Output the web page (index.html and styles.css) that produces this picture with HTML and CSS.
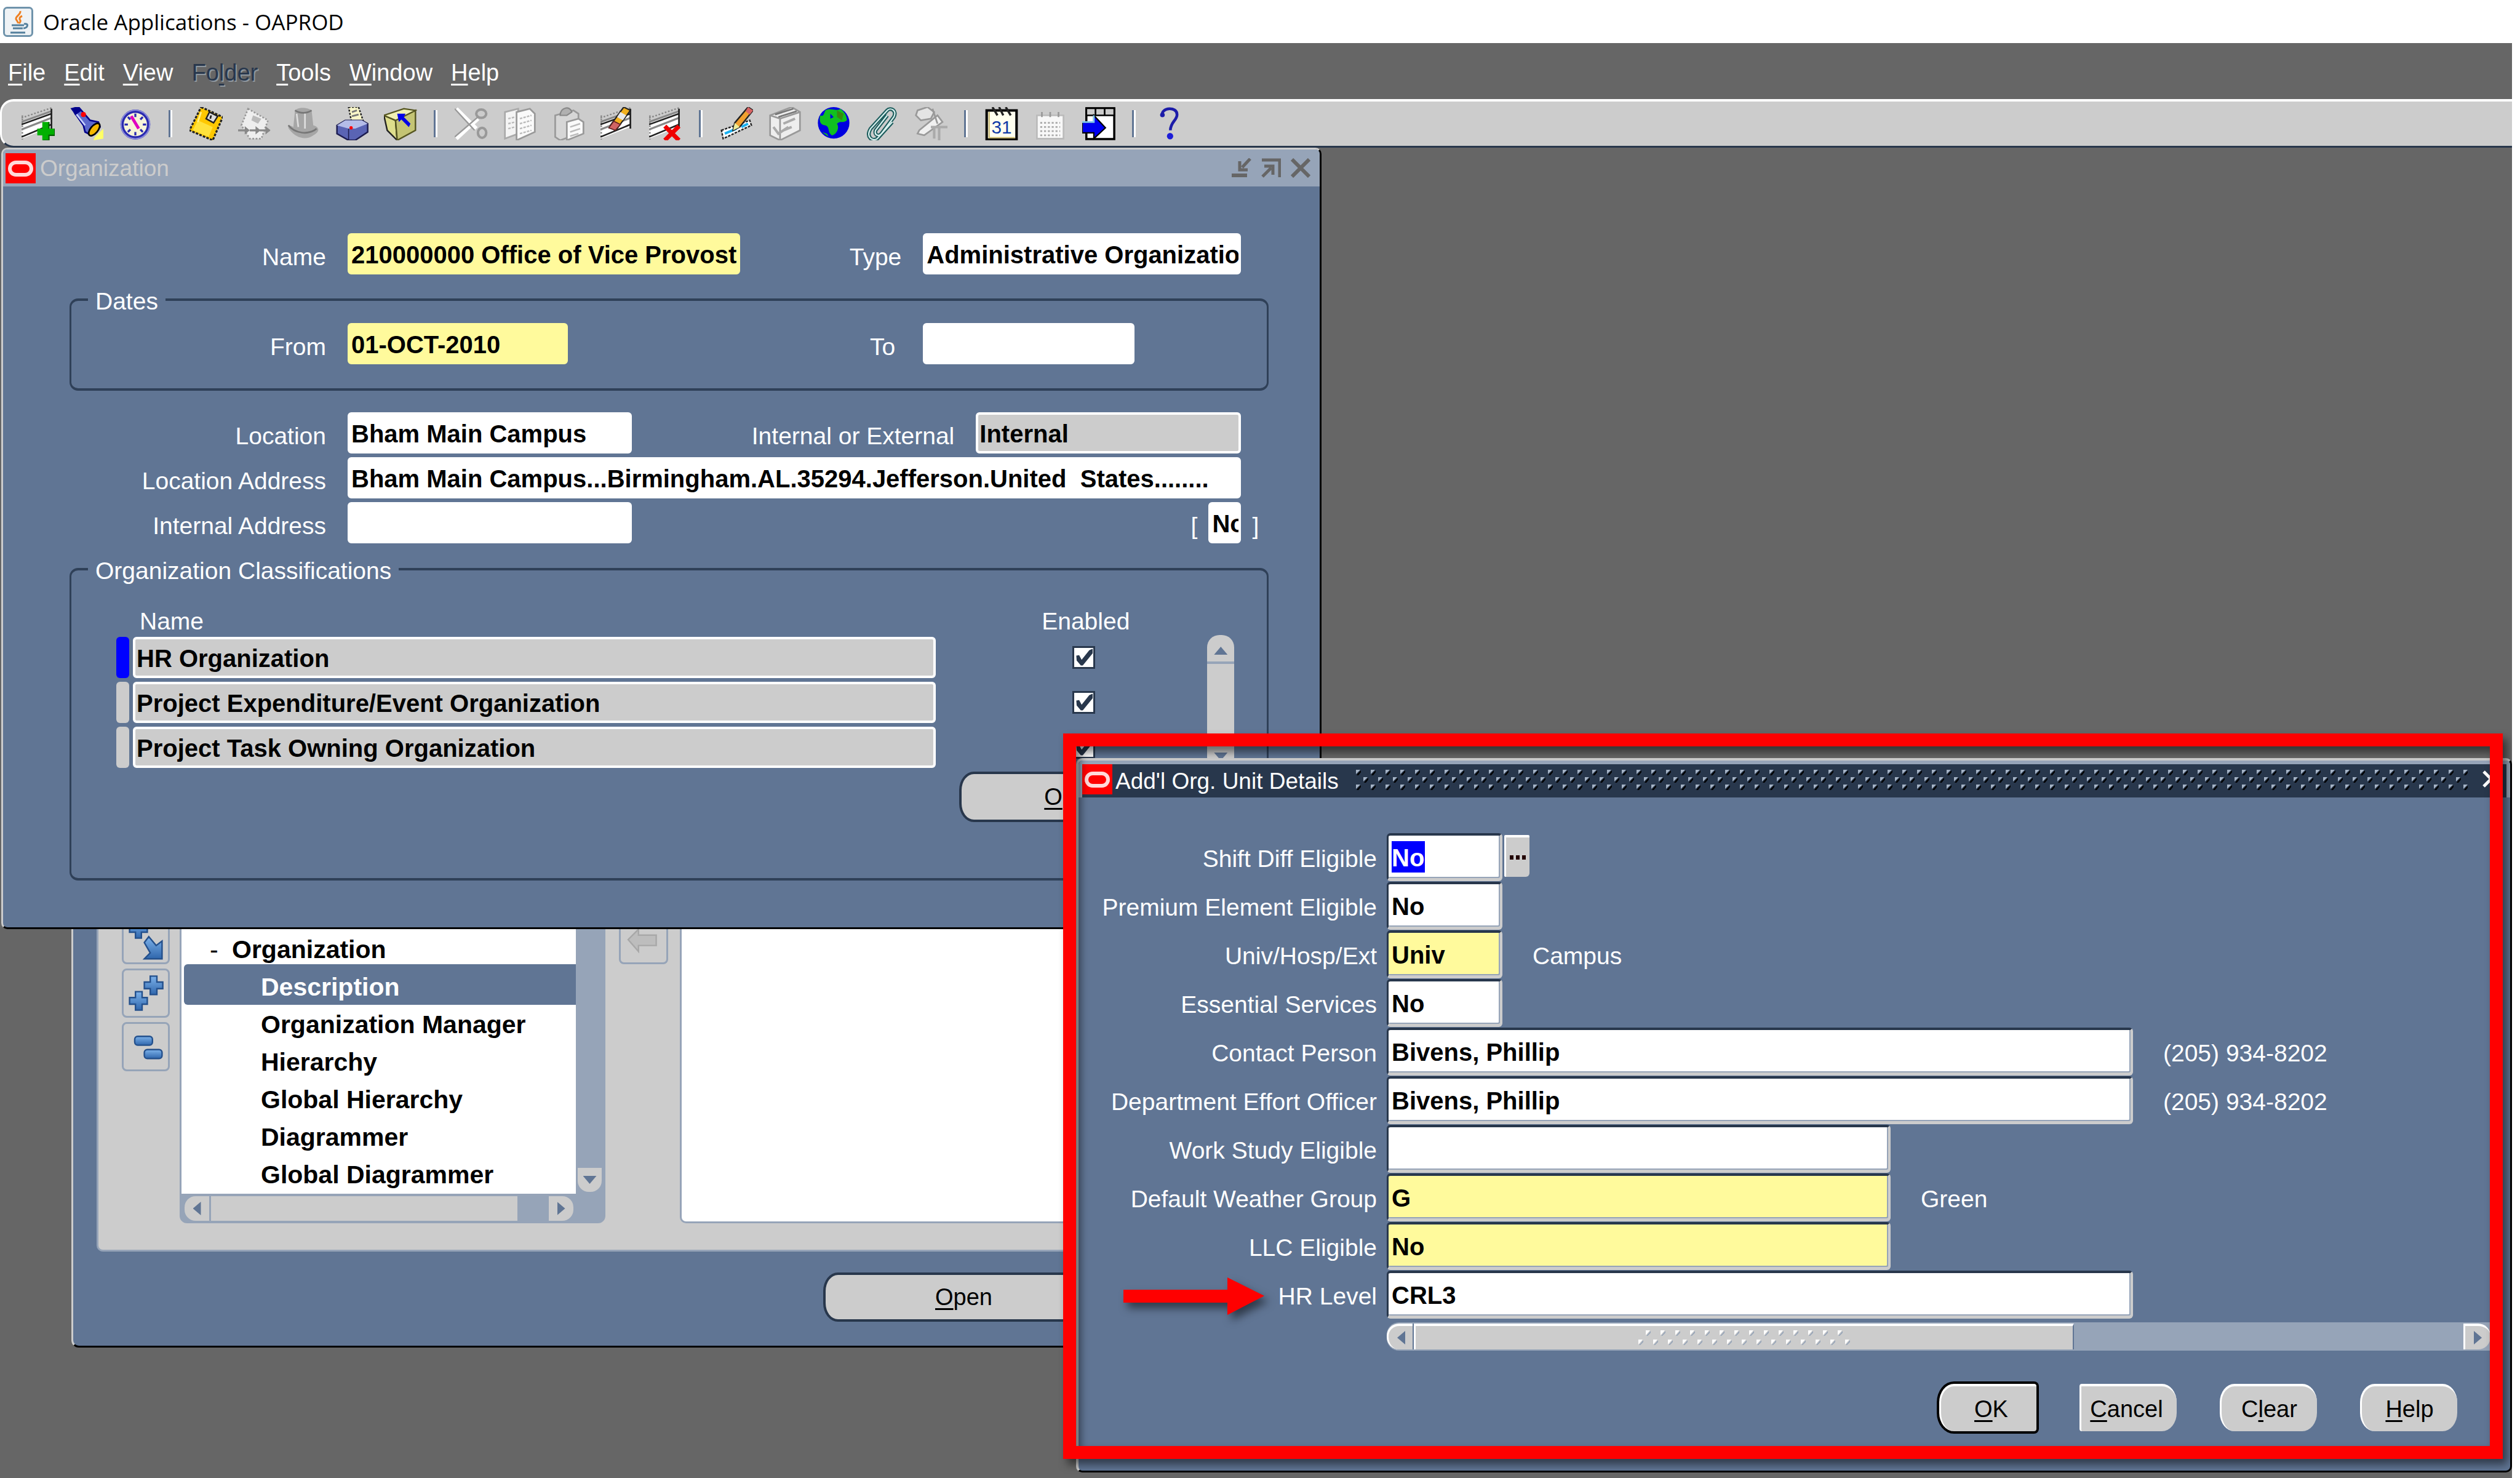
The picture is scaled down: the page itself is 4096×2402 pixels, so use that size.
FILE: index.html
```html
<!DOCTYPE html>
<html lang="en">
<head>
<meta charset="utf-8">
<title>Oracle Applications - OAPROD</title>
<link rel="stylesheet" href="styles.css">
</head>
<body>
<svg class="defs" aria-hidden="true">
  <symbol id="sheet" viewBox="0 0 20 20">
    <path d="M0 9 18 2V12L0 19Z" fill="#fff"/>
    <path d="M0 6.5 18 .5M.5 5V19.500" stroke="#888" stroke-width=".9" stroke-dasharray="1 1" fill="none"/>
    <path d="M0 9 18 2.500M0 13.500 18 6.500" stroke="#888" stroke-width="1.200" fill="none"/>
    <path d="M0 10.500 18 4M0 18 18 10.500M18 1V13" stroke="#222" stroke-width="1" fill="none"/>
  </symbol>
  <symbol id="oracle" viewBox="0 0 49 49">
    <rect width="49" height="49" fill="#f00"/>
    <rect x="7" y="15" width="35" height="20" rx="10" fill="none" stroke="#ffd9d9" stroke-width="6"/>
  </symbol>
  <linearGradient id="glass" x1="0" y1="0" x2="0" y2="1">
    <stop offset="0" stop-color="#7db2ea"/>
    <stop offset="1" stop-color="#2f66ac"/>
  </linearGradient>
  <pattern id="grip" width="24" height="24" patternUnits="userSpaceOnUse">
    <path d="M0 0H7L0 7ZM12 12H19L12 19Z" fill="#a6b4c6"/>
    <path d="M8 1V4L4 9H1L3 6ZM20 13V16L16 21H13L15 18Z" fill="#000"/>
  </pattern>
  <pattern id="thumbgrip" width="24" height="30" patternUnits="userSpaceOnUse">
    <path d="M12 0H19L12 8ZM0 15H7L0 23Z" fill="#fff"/>
    <path d="M20 1V4L15 9H13ZM8 16V19L3 24H1Z" fill="#96a4b8"/>
  </pattern>
</svg>

<header class="titlebar">
  <svg class="java" viewBox="0 0 49 49" aria-hidden="true">
    <rect x="1.500" y="1.500" width="46" height="46" rx="5" fill="#eef2f5" stroke="#6f93ab" stroke-width="3"/>
    <path d="M28 7C29 13 20 15 21 20C22 23 25 24 24 27M31 15C26 17 26 20 28 22C29 24 27 26 26 27" fill="none" stroke="#ee8022" stroke-width="3"/>
    <path d="M14 30H34M16 35H32M12 42H36" stroke="#537f9c" stroke-width="3" fill="none"/>
    <path d="M34 28C42 26 41 34 33 35" stroke="#537f9c" stroke-width="3" fill="none"/>
  </svg>
  <h1>Oracle Applications - OAPROD</h1>
</header>

<nav class="menubar">
  <button><u>F</u>ile</button>
  <button><u>E</u>dit</button>
  <button><u>V</u>iew</button>
  <button disabled>Fo<u>l</u>der</button>
  <button><u>T</u>ools</button>
  <button><u>W</u>indow</button>
  <button><u>H</u>elp</button>
</nav>

<div class="toolbar">
  <button aria-label="New"><svg viewBox="0 0 20 20"><use href="#sheet"/><path d="M12.500 9H16.500V13H20V17H16.500V20H12.500V17H9.500V13H12.500Z" fill="#00b000"/><path d="M16.500 9V13M20 13V17H16.500V20H13" fill="none" stroke="#006000" stroke-width=".8"/></svg></button>
  <button aria-label="Find"><svg viewBox="0 0 20 20"><path d="M15 18 20 13 20 19 14 20Z" fill="#ffff66"/><path d="M1 1 5 0 12 8 17 9 18 12 13 17 9 15 8 11Z" fill="#5c68cc" stroke="#00008b" stroke-width="1"/><path d="M2 2 9 11" stroke="#c8d0ff" stroke-width="1"/><path d="M1 1 5 0 7 2 3 5Z" fill="#00008b"/><circle cx="8" cy="4.500" r="1.500" fill="#f00"/><ellipse cx="14.500" cy="13.500" rx="4.500" ry="2.200" transform="rotate(-50 14.500 13.500)" fill="#f5b800" stroke="#000"/></svg></button>
  <button aria-label="Show Navigator"><svg viewBox="0 0 20 20"><circle cx="10" cy="10.500" r="8" fill="#f6f3d8" stroke="#2a2ab0" stroke-width="2"/><circle cx="10" cy="10.500" r="8.600" fill="none" stroke="#8c8cdc" stroke-width=".7"/><path d="M10 4V6M10 15V17M3.500 10.500H5.500M14.500 10.500H16.500M5.500 6 7 7.500M14.500 6 13 7.500M5.500 15 7 13.500M14.500 15 13 13.500" stroke="#2a2ab0" stroke-width="1.200"/><path d="M7.500 5.500 12 13" stroke="#e000c0" stroke-width="1.800"/></svg></button>
  <span class="sep"></span>
  <button aria-label="Save"><svg viewBox="0 0 20 20"><path d="M7 0 20 6 14 20 0 14Z" fill="#ffc800" stroke="#222" stroke-width="1.200" stroke-dasharray="1.500 .8"/><path d="M12 3 17 5.500 14.500 9.500 10 7Z" fill="#ddd" stroke="#222" stroke-width=".9"/><path d="M13 5 12.500 7" stroke="#222"/><path d="M5 8 14 12 11.500 18 2 14Z" fill="#ffe23c"/><path d="M7 3 5 9" stroke="#fff08a"/></svg></button>
  <button aria-label="Next Step" disabled><svg viewBox="0 0 20 20"><path d="M6 1 18 8 14 19 7 19 2 11Z" fill="#eee" stroke="#999" stroke-dasharray="1 1"/><path d="M9 5 14 7 12 10 8 8Z" fill="#bbb"/><path d="M0 14H6M7 14H12M13 14H19" stroke="#888" stroke-width="1.200"/><path d="M4 11.500 7 14 4 16.500ZM10.500 11.500 13.500 14 10.500 16.500ZM16.500 11.500 19.500 14 16.500 16.500Z" fill="#888"/></svg></button>
  <button aria-label="Switch Responsibility" disabled><svg viewBox="0 0 20 20"><path d="M5 2C7 0 12 0 15 2L16 11C20 12 20 15 16 17C12 20 6 19 2 14C0 12 1 10 4 12Z" fill="#a6a6a6"/><path d="M5 2C8 4 12 4 15 2M1 11C5 16 13 17 18 13" fill="none" stroke="#777"/><path d="M6 4 7 12M11 4V13" stroke="#ddd"/></svg></button>
  <button aria-label="Print"><svg viewBox="0 0 20 20"><path d="M8 0H14L17 9 10 10Z" fill="#f8f6c8" stroke="#222" stroke-width=".9" stroke-dasharray="1.200 .8"/><path d="M10 3 13 2M10 5.500 14 4.500" stroke="#777"/><path d="M1 11 6 8H16L19.500 10V15L12 20H8L1 16Z" fill="#5a64b4" stroke="#1c1c50" stroke-width=".9"/><path d="M1 11 6 8H16L19.500 10 12 13H8Z" fill="#b4bce8"/><path d="M8 13V20" stroke="#1c1c50" stroke-width=".6"/><circle cx="9.500" cy="12.500" r="1" fill="#f00"/></svg></button>
  <button aria-label="Close Form"><svg viewBox="0 0 20 20"><path d="M0 5 7 8 8 20 2 14Z" fill="#dede8c" stroke="#222" stroke-width=".9"/><path d="M7 8 19 2V14L8 20Z" fill="#c4c474" stroke="#555520" stroke-width=".9"/><path d="M0 5 12 1 19 2 7 8Z" fill="#efefb4" stroke="#555520" stroke-width=".8"/><path d="M8 4H13L12 6 16 10 15 12 10.500 7.500 9 9Z" fill="#0000e6"/></svg></button>
  <span class="sep"></span>
  <button aria-label="Cut" disabled><svg viewBox="0 0 20 20"><path d="M1 1 13 13M1 19 14 7" stroke="#fff" stroke-width="2.400"/><path d="M0 1 12 14M0 18 14 6" stroke="#999" stroke-width=".9"/><ellipse cx="16" cy="4" rx="3" ry="2.500" fill="none" stroke="#999" stroke-width="1.500"/><ellipse cx="16.500" cy="15.500" rx="2.500" ry="3" fill="none" stroke="#999" stroke-width="1.500"/></svg></button>
  <button aria-label="Copy" disabled><svg viewBox="0 0 20 20"><path d="M1 3 9 1V16L1 19Z" fill="#f4f4f4" stroke="#aaa"/><path d="M8 3 16 1 19 4V15L8 20Z" fill="#fafafa" stroke="#999"/><path d="M10 7 17 5M10 10 17 8M10 13 17 11M10 16 17 14M3 7 7 6M3 10 7 9M3 13 7 12" stroke="#bbb" stroke-width=".9" stroke-dasharray="1.500 .7"/></svg></button>
  <button aria-label="Paste" disabled><svg viewBox="0 0 20 20"><path d="M2 5 13 2 16 4V16L5 20 2 18Z" fill="#d6d6d6" stroke="#999"/><path d="M5 5C5 0 11 -1 12 3L9 5Z" fill="#b0b0b0" stroke="#888" stroke-width=".8"/><path d="M9 9 16 7 19 9V16L9 20Z" fill="#fafafa" stroke="#999"/><path d="M11 12 17 10M11 15 17 13M11 17.500 16 16" stroke="#bbb" stroke-width=".9"/></svg></button>
  <button aria-label="Clear Record"><svg viewBox="0 0 20 20"><use href="#sheet"/><path d="M14 0 18 2 10 13 6 11Z" fill="#f2b01e" stroke="#222" stroke-width=".8"/><path d="M12 3 15.500 5 13.500 8 10 6Z" fill="#e8e8e8"/><path d="M8 8.500 12 10.500 9 14 5 12.500Z" fill="#d06464" stroke="#602020" stroke-width=".6"/></svg></button>
  <button aria-label="Delete"><svg viewBox="0 0 20 20"><use href="#sheet"/><path d="M9.500 11.500 18 20M18 11.500 9.500 20" stroke="#f00000" stroke-width="2.600"/></svg></button>
  <span class="sep"></span>
  <button aria-label="Edit Field"><svg viewBox="0 0 20 20"><path d="M1 14 18 8 19 11 2 19Z" fill="#fff" stroke="#222" stroke-width=".9" stroke-dasharray="1.500 .7"/><path d="M3 16 10 13M13 12 17 10" stroke="#1ab0f0" stroke-width="1.500"/><path d="M17 0 20 2 12 12 8 14 9 9.500Z" fill="#f0a030" stroke="#222" stroke-width=".9"/><path d="M17 0 20 2 18 4.500 15.500 2.500Z" fill="#d86464"/><path d="M9 9.500 12 12 8 14Z" fill="#eeee9a"/></svg></button>
  <button aria-label="Zoom" disabled><svg viewBox="0 0 20 20"><path d="M1 5 14 0 19 3V14L7 20 1 17Z" fill="#eee" stroke="#999"/><path d="M1 5 7 7 19 3M7 7V20" fill="none" stroke="#999"/><path d="M4 4.500 15 1M6 6 17 2.500" stroke="#777"/><path d="M9 10 16 7M9 14 14 12M3 12 6 16 12 12" stroke="#aaa" stroke-width="1.500" fill="none"/></svg></button>
  <button aria-label="Translations"><svg viewBox="0 0 20 20"><circle cx="10" cy="9.500" r="9.500" fill="#0000e0"/><path d="M5 2C8 0 12 3 14 1C17 3 18 6 18 8C16 10 14 8 12 10C14 13 11 17 9 17C6 15 8 12 5 11C2 11 1 8 2 5C4 6 4 4 5 2Z" fill="#10c020"/><path d="M12 2 16 4 15 8 12 6Z" fill="#388a10"/><path d="M3 15 6 16 7 18Z" fill="#10c020"/><path d="M8 4 10 6 8 7Z" fill="#0000e0"/></svg></button>
  <button aria-label="Attachments"><svg viewBox="0 0 20 20"><path d="M13 5 6 14C5 17 8 18 9.500 16L17 6C19 2 15 0 13 2L3 13C0 18 4 21 7 19L16 9" fill="none" stroke="#1c5c5c" stroke-width="2.300"/><path d="M13 5 6 14C5 17 8 18 9.500 16L17 6C19 2 15 0 13 2L3 13C0 18 4 21 7 19L16 9" fill="none" stroke="#d8f0ee" stroke-width=".8"/></svg></button>
  <button aria-label="Folder Tools" disabled><svg viewBox="0 0 20 20"><path d="M2 2 8 0 12 3 10 7 4 8 1 5Z" fill="#e4e4e4" stroke="#999"/><path d="M3 14 14 5 17 9 6 17 2 16Z" fill="#f0f0f0" stroke="#999"/><path d="M10 12H20M12 12V19M15 12V20" stroke="#aaa" stroke-width="1.500"/><path d="M11 1 14 10" stroke="#999"/></svg></button>
  <span class="sep"></span>
  <button aria-label="Calendar"><svg viewBox="0 0 20 20"><path d="M1 2H19V19.500H1Z" fill="#fffff0" stroke="#000" stroke-width="1.500"/><path d="M2.500 3V18.500H18" fill="none" stroke="#c8b870" stroke-width=".8"/><path d="M4.500 0 7.500 5M8.500 0 11 5M12.500 0 15.500 5" stroke="#222" stroke-width="1.300"/><text x="10" y="16" text-anchor="middle" class="day">31</text></svg></button>
  <button aria-label="Schedule" disabled><svg viewBox="0 0 20 20"><path d="M2 5H18V19H2Z" fill="#f8f8f8" stroke="#bbb"/><path d="M5 3V6M10 3V6M15 3V6" stroke="#999"/><path d="M4 9.500H16M4 12H16M4 14.500H16M4 17H16" stroke="#aaa" stroke-width="1" stroke-dasharray="1.200 1.100"/></svg></button>
  <button aria-label="Export"><svg viewBox="0 0 20 20"><path d="M2.500.7H19.300V19.300H2.500Z" fill="#fff" stroke="#000" stroke-width="1.300"/><path d="M2.500.7H19.300V5H2.500Z" fill="#ccc" stroke="#000"/><path d="M8 1V5M13.500 1V5" stroke="#000"/><path d="M0 9H7V5L14 12.500 7 19V15.500H0Z" fill="#0000f0" stroke="#000" stroke-width=".8"/><path d="M0 9H7V5" fill="none" stroke="#80c8f0"/></svg></button>
  <span class="sep"></span>
  <button aria-label="Help"><svg viewBox="0 0 20 20"><path d="M5.500 5C5 0 14.500-.5 14.500 4.500C14.500 8 10.500 9 10.500 14" fill="none" stroke="#1c1ca8" stroke-width="1.700"/><circle cx="5.700" cy="4.700" r="1.400" fill="#1c1ca8"/><circle cx="10.300" cy="17.500" r="1.900" fill="#1c1cd8"/></svg></button>
</div>

<main class="desktop">
  <section class="window navigator">
    <div class="nav-panel">
      <div class="nav-tools">
        <button aria-label="Expand"><svg viewBox="0 0 30 30"><path d="M8 2H12V6H16V10H12V14H8V10H4V6H8Z" fill="url(#glass)" stroke="#24508c"/><path d="M14 17 17 13 22 19 26 16V28H14L18 24Z" fill="url(#glass)" stroke="#24508c"/></svg></button>
        <button aria-label="Expand All"><svg viewBox="0 0 30 30"><path d="M18 3.500H22.500V7.500H26.500V12H22.500V16H18V12H14V7.500H18Z" fill="url(#glass)" stroke="#24508c"/><path d="M8 14H12.500V18H16V22.500H12.500V26.500H8V22.500H4V18H8Z" fill="url(#glass)" stroke="#24508c"/></svg></button>
        <button aria-label="Collapse All"><svg viewBox="0 0 30 30"><rect x="7.500" y="8" width="12" height="6" rx="2" fill="url(#glass)" stroke="#24508c"/><rect x="14" y="17" width="12" height="6" rx="2" fill="url(#glass)" stroke="#24508c"/></svg></button>
      </div>
      <div class="tree-box">
        <div class="tree-main">
          <ul class="tree">
            <li class="parent"><span class="twig">-</span>Organization</li>
            <li class="current">Description</li>
            <li>Organization Manager</li>
            <li>Hierarchy</li>
            <li>Global Hierarchy</li>
            <li>Diagrammer</li>
            <li>Global Diagrammer</li>
          </ul>
          <div class="vtrack"><button class="sb down" aria-label="Scroll down"></button></div>
        </div>
        <div class="htrack">
          <button class="sb left" aria-label="Scroll left"></button>
          <div class="hthumb"></div>
          <button class="sb right" aria-label="Scroll right"></button>
        </div>
      </div>
      <button class="move" aria-label="Remove" disabled><svg viewBox="0 0 30 30"><path d="M5 15 12 8V12H24V19H12V23Z" fill="#bdbdbd" stroke="#a8a8a8"/></svg></button>
      <div class="topten"></div>
    </div>
    <button class="push open"><u>O</u>pen</button>
  </section>

  <section class="window organization">
    <header class="caption">
      <svg class="logo" aria-hidden="true"><use href="#oracle"/></svg>
      <h2>Organization</h2>
      <div class="controls">
        <button aria-label="Minimize"><svg viewBox="0 0 32 32"><path d="M0 28H25" stroke="#666" stroke-width="6"/><path d="M30 1 17 15M13 5V19H26" fill="none" stroke="#666" stroke-width="5"/></svg></button>
        <button aria-label="Maximize"><svg viewBox="0 0 32 32"><path d="M1 3H30V31" fill="none" stroke="#666" stroke-width="5"/><path d="M2 30 16 16M5 13H19V27" fill="none" stroke="#666" stroke-width="5"/></svg></button>
        <button aria-label="Close"><svg viewBox="0 0 32 32"><path d="M2 2 30 30M30 2 2 30" stroke="#666" stroke-width="6"/></svg></button>
      </div>
    </header>
    <form class="org-form">
      <div class="row">
        <label class="lead" for="name">Name</label>
        <input class="field required w-name" id="name" value="210000000 Office of Vice Provost">
        <label class="second" for="type">Type</label>
        <input class="field w-type" id="type" value="Administrative Organization">
      </div>
      <fieldset class="dates">
        <legend>Dates</legend>
        <div class="row">
          <label class="lead" for="from">From</label>
          <input class="field required w-from" id="from" value="01-OCT-2010">
          <label class="second" for="to">To</label>
          <div class="slot w-type"><input class="field w-to" id="to"></div>
        </div>
      </fieldset>
      <div class="rows">
        <div class="row">
          <label class="lead" for="location">Location</label>
          <input class="field w-loc" id="location" value="Bham Main Campus">
          <label class="second" for="scope">Internal or External</label>
          <input class="field readonly w-scope" id="scope" value="Internal" readonly>
        </div>
        <div class="row">
          <label class="lead" for="address">Location Address</label>
          <input class="field grow" id="address" value="Bham Main Campus...Birmingham.AL.35294.Jefferson.United  States........">
        </div>
        <div class="row flexrow">
          <label class="lead" for="internal">Internal Address</label>
          <input class="field w-loc" id="internal">
          <div class="flexfield second"><label for="dff">[</label><input class="field w-dff" id="dff" value="No"><span>]</span></div>
        </div>
      </div>
      <fieldset class="classes">
        <legend>Organization Classifications</legend>
        <div class="class-list">
          <table>
            <thead><tr><th class="c-mark"></th><th class="c-name">Name</th><th class="c-on">Enabled</th></tr></thead>
            <tbody>
              <tr><td><span class="mark on"></span></td><td><input class="field readonly full" aria-label="Name 1" value="HR Organization" readonly></td><td class="c-on"><input class="check" type="checkbox" aria-label="Enabled 1" checked></td></tr>
              <tr><td><span class="mark"></span></td><td><input class="field readonly full" aria-label="Name 2" value="Project Expenditure/Event Organization" readonly></td><td class="c-on"><input class="check" type="checkbox" aria-label="Enabled 2" checked></td></tr>
              <tr><td><span class="mark"></span></td><td><input class="field readonly full" aria-label="Name 3" value="Project Task Owning Organization" readonly></td><td class="c-on"><input class="check" type="checkbox" aria-label="Enabled 3" checked></td></tr>
            </tbody>
          </table>
          <div class="vbar">
            <button type="button" class="sb up" aria-label="Scroll up"></button>
            <div class="vthumb"></div>
            <button type="button" class="sb down" aria-label="Scroll down"></button>
          </div>
        </div>
        <div class="class-actions"><button type="button" class="push others"><u>O</u></button></div>
      </fieldset>
    </form>
  </section>

  <section class="window details">
    <header class="caption-wrap">
      <div class="caption dark">
        <svg class="logo" aria-hidden="true"><use href="#oracle"/></svg>
        <h2>Add'l Org. Unit Details</h2>
        <svg class="grip" aria-hidden="true"><rect width="100%" height="34" fill="url(#grip)"/></svg>
        <button class="close" aria-label="Close"><svg viewBox="0 0 28 28"><path d="M2 2 26 26M26 2 2 26" stroke="#fff" stroke-width="5"/></svg></button>
      </div>
    </header>
    <form class="detail-form">
      <div class="line"><label for="d1">Shift Diff Eligible</label><input class="sunken short picked" id="d1" value="No"><button type="button" class="lov" aria-label="List of values"><i></i><i></i><i></i></button></div>
      <div class="line"><label for="d2">Premium Element Eligible</label><input class="sunken short" id="d2" value="No"></div>
      <div class="line"><label for="d3">Univ/Hosp/Ext</label><input class="sunken short required" id="d3" value="Univ"><span class="note">Campus</span></div>
      <div class="line"><label for="d4">Essential Services</label><input class="sunken short" id="d4" value="No"></div>
      <div class="line"><label for="d5">Contact Person</label><input class="sunken long" id="d5" value="Bivens, Phillip"><span class="note">(205) 934-8202</span></div>
      <div class="line"><label for="d6">Department Effort Officer</label><input class="sunken long" id="d6" value="Bivens, Phillip"><span class="note">(205) 934-8202</span></div>
      <div class="line"><label for="d7">Work Study Eligible</label><input class="sunken medium" id="d7"></div>
      <div class="line"><label for="d8">Default Weather Group</label><input class="sunken medium required" id="d8" value="G"><span class="note">Green</span></div>
      <div class="line"><label for="d9">LLC Eligible</label><input class="sunken medium required" id="d9" value="No"></div>
      <div class="line"><label for="d10">HR Level</label><input class="sunken long" id="d10" value="CRL3"></div>
      <div class="hbar">
        <button type="button" class="sb left" aria-label="Scroll left"></button>
        <div class="bigthumb"><svg width="344" height="24" aria-hidden="true"><rect width="344" height="24" fill="url(#thumbgrip)"/></svg></div>
        <button type="button" class="sb right" aria-label="Scroll right"></button>
      </div>
      <div class="actions">
        <button type="button" class="act ok"><u>O</u>K</button>
        <button type="button" class="act cancel"><u>C</u>ancel</button>
        <button type="button" class="act">C<u>l</u>ear</button>
        <button type="button" class="act"><u>H</u>elp</button>
      </div>
    </form>
  </section>

  <div class="highlight"></div>
  <svg class="pointer" viewBox="0 0 229 61" aria-hidden="true"><path d="M0 20H169V0L229 30 169 61V41H0Z" fill="#f00"/></svg>
</main>
</body>
</html>
```
FILE: styles.css
```css
:root {
  --slate: #607594;
  --mist: #96a4b8;
  --navy: #28374c;
  --silver: #ccc;
  --cream: #fffa9c;
}

* { box-sizing: border-box; }

body {
  margin: 0;
  padding-right: 13px;
  min-height: 100vh;
  display: flex;
  flex-direction: column;
  overflow: hidden;
  background: #fff;
  font-family: "Liberation Sans", Arial, sans-serif;
  font-size: 39px;
}

button, input { font: inherit; margin: 0; padding: 0; }
button { border: 0; background: none; color: inherit; }
h1, h2 { margin: 0; font-weight: normal; }
u { text-decoration-thickness: 3px; text-underline-offset: 5px; text-decoration-skip-ink: none; }
.defs { position: absolute; width: 0; height: 0; }

/* Application frame */
.titlebar { height: 70px; padding-left: 5px; display: flex; align-items: center; gap: 16px; }
.java { width: 49px; height: 49px; }
.titlebar h1 { font: 35px "Open Sans", sans-serif; color: #000; }

.menubar {
  height: 91px;
  padding: 5px 13px 0;
  display: flex;
  align-items: center;
  gap: 30px;
  background: #666;
  color: #fff;
  font-size: 38px;
}
.menubar button:disabled { color: var(--navy); text-shadow: 2px 2px 0 #8f979f; }

.toolbar {
  height: 79px;
  padding-left: 19px;
  display: flex;
  align-items: center;
  background: var(--silver);
  border-top: 4px solid #fff;
  border-bottom: 3px solid var(--navy);
  border-left: 3px solid #fff;
  border-radius: 22px 0 0 22px;
  box-shadow: -30px 0 0 #666;
}
.toolbar button { width: 79px; height: 60px; display: flex; align-items: center; justify-content: center; }
.toolbar svg { width: 54px; height: 54px; }
.toolbar .sep { width: 6px; height: 44px; margin: 0 15px; border-left: 3px solid var(--slate); border-right: 3px solid #fff; }
.day { font: 11px "Liberation Sans", sans-serif; fill: #103ca8; }

/* Desktop and windows */
.desktop { flex: 1; position: relative; overflow: hidden; background: #666; }
.window { position: absolute; background: var(--slate); color: #fff; }
.caption { display: flex; align-items: center; }
.caption h2 { padding-top: 2px; font-size: 37px; line-height: 44px; }
.logo { width: 49px; height: 49px; flex: none; }

.push {
  border: 4px solid var(--navy);
  background: var(--silver);
  color: #000;
  font-size: 38px;
  border-radius: 24px / 30px;
}

.organization {
  left: 2px;
  top: 0;
  width: 52.400vw;
  border: 3px solid #000;
  border-top-color: var(--silver);
  border-left-color: var(--silver);
  border-radius: 10px;
}
.organization .caption { height: 60px; padding: 0 15px 0 4px; background: var(--mist); border-radius: 7px 7px 0 0; }
.organization h2 { margin-left: 7px; color: var(--silver); }
.controls { margin-left: auto; display: flex; gap: 16px; }
.controls button, .controls svg { width: 32px; height: 32px; display: block; }

.org-form { padding: 76px 83px 76px 108px; }
.row { display: flex; gap: 35px; padding-right: 45px; }
.row label, .flexfield span { line-height: 57px; padding-top: 10px; }
.row .lead { width: 417px; text-align: right; flex: none; }
.second { margin-left: auto; }
.rows { margin-top: 35px; display: grid; gap: 6px; }
.slot { display: flex; }
.flexrow { padding-right: 16px; }
.flexfield { display: flex; gap: 18px; }

.field {
  height: 67px;
  min-width: 0;
  padding: 3px 0 0 2px;
  border: 4px solid #fff;
  border-radius: 6px;
  background: #fff;
  color: #000;
  font-size: 40px;
  font-weight: bold;
}
.field.required { background: var(--cream); border-color: var(--cream); }
.field.readonly { background: var(--silver); }
.grow { flex: 1; }
.full { display: block; width: 100%; }
.w-name { width: 638px; }
.w-type { width: 517px; }
.w-from { width: 358px; }
.w-to { width: 344px; }
.w-loc { width: 462px; }
.w-scope { width: 431px; }
.w-dff { width: 53px; }

fieldset {
  min-width: 0;
  margin: 0;
  padding: 0;
  border: 4px solid #2f4058;
  border-width: 4px 3px;
  border-radius: 14px;
}
legend { margin-left: 27px; padding: 6px 12px 0; line-height: 46px; }
.dates { margin-top: 15px; }
.dates .row { padding: 12px 42px 39px 0; }
.dates .lead { width: 414px; }
.dates .second { padding-right: 10px; }
.classes { margin-top: 16px; }

.class-list { display: flex; padding: 0 53px 0 73px; }
.class-list table { flex: 1; table-layout: fixed; border-collapse: collapse; }
.class-list th { padding: 36px 0 2px; font-weight: normal; line-height: 46px; text-align: left; }
.class-list td { padding: 0 0 6px; }
.class-list .c-mark { width: 27px; }
.class-list th.c-name { padding-left: 11px; }
.class-list .c-on { width: 441px; padding-left: 40px; text-align: center; }
.class-list th.c-on { padding-left: 46px; }
.mark { display: block; width: 21px; height: 67px; border-radius: 6px; background: var(--silver); }
.mark.on { background: #00f; }
.check {
  appearance: none;
  display: block;
  width: 37px;
  height: 37px;
  margin: 0 auto;
  border: 3px solid var(--navy);
  background: #fff;
}
.check:checked::before {
  content: "";
  display: block;
  height: 31px;
  background: var(--navy);
  clip-path: polygon(10% 40%, 25% 38%, 38% 62%, 78% 12%, 96% 4%, 96% 28%, 44% 92%, 34% 92%, 12% 66%);
}

/* Scroll bars */
.sb { display: flex; align-items: center; justify-content: center; background: var(--silver); }
.sb::before { content: ""; width: 22px; height: 13px; background: var(--slate); }
.sb.up::before { clip-path: polygon(50% 0, 100% 100%, 0 100%); }
.sb.down::before { clip-path: polygon(0 0, 100% 0, 50% 100%); }
.sb.left::before { width: 13px; height: 22px; clip-path: polygon(100% 0, 100% 100%, 0 50%); }
.sb.right::before { width: 13px; height: 22px; clip-path: polygon(0 0, 100% 50%, 0 100%); }
.vbar { width: 44px; margin: 81px 0 3px; display: flex; flex-direction: column; background: var(--silver); border-radius: 20px; }
.vbar .sb { height: 43px; background: none; }
.vbar .up { padding-top: 8px; }
.vthumb { flex: 1; border-top: 4px solid var(--mist); }

.class-actions { display: flex; justify-content: flex-end; padding: 0 106px 91px 0; }
.others { width: 394px; height: 82px; padding-left: 134px; text-align: left; }

/* Navigator */
.navigator {
  left: 116px;
  top: 1200px;
  width: 50.900vw;
  padding: 20px 0 39px 38px;
  border: 3px solid #000;
  border-top-color: var(--silver);
  border-left-color: var(--silver);
  border-radius: 12px;
}
.nav-panel {
  display: flex;
  padding: 24px 0 43px 38px;
  background: var(--silver);
  border: 3px solid var(--mist);
  border-width: 0 0 3px 3px;
  border-radius: 0 0 0 10px;
}
.nav-tools { display: flex; flex-direction: column; gap: 7px; margin-right: 16px; }
.nav-tools button, .move { width: 78px; height: 80px; border: 3px solid var(--mist); border-radius: 8px; background: var(--silver); }
.nav-tools svg, .move svg { display: block; width: 72px; height: 74px; }
.tree-box { width: 692px; border-radius: 0 0 12px 12px; overflow: hidden; background: var(--mist); }
.tree-main { display: flex; }
.tree { flex: 1; margin: 0 0 0 3px; padding: 19px 0 7px; list-style: none; background: #fff; color: #000; font-size: 41px; font-weight: bold; }
.tree li { height: 61px; padding: 14px 0 0 129px; line-height: 47px; white-space: nowrap; }
.tree .parent { padding-left: 46px; display: flex; }
.twig { width: 36px; font-weight: normal; }
.tree .current { margin: 0 0 -5px 4px; height: 66px; padding-left: 125px; background: var(--slate); color: #fff; border-radius: 6px 0 0 6px; }
.vtrack { width: 48px; padding: 0 6px 3px 3px; display: flex; flex-direction: column; justify-content: flex-end; }
.vtrack .sb { height: 39px; border-radius: 0 0 18px 18px; }
.htrack { height: 48px; padding: 4px 52px 4px 8px; display: flex; }
.htrack .sb { width: 40px; }
.htrack .left { border-radius: 18px 0 0 18px; }
.htrack .right { margin-left: auto; border-radius: 0 18px 18px 0; }
.hthumb { width: 498px; margin-left: 3px; background: var(--silver); }
.move { width: 80px; margin: 0 19px 0 22px; }
.topten { flex: 1; background: #fff; border: 3px solid var(--mist); border-width: 0 0 3px 3px; border-radius: 0 0 0 10px; }
.open { display: block; width: 457px; height: 80px; margin: 34px 0 0 1181px; }

/* Details dialog */
.details {
  left: 1749px;
  right: 0;
  top: 992px;
  border: 3px solid #000;
  border-top: 4px solid var(--silver);
  border-left: 4px solid var(--silver);
  border-radius: 10px;
}
.caption-wrap { padding: 6px 6px 0; background: var(--mist); border-radius: 7px 7px 0 0; }
.dark { height: 54px; align-items: flex-start; background: var(--navy); }
.dark h2 { margin: 4px 28px 0 5px; }
.grip { flex: 1; height: 34px; margin-top: 9px; }
.close { width: 28px; margin: 10px 11px 0 24px; }
.close svg { display: block; width: 28px; height: 28px; }

.detail-form { padding: 58px 0 64px; }
.line { display: flex; height: 79px; }
.line label { width: 485px; margin-right: 16px; text-align: right; line-height: 83px; }
.note { margin-left: 49px; line-height: 83px; }
.sunken {
  height: 78px;
  padding: 3px 0 0 5px;
  border-style: solid;
  border-width: 4px 4px 5px 3px;
  border-color: var(--navy) var(--silver) var(--silver) var(--navy);
  border-radius: 6px;
  background: #fff;
  box-shadow: inset -2px -2px 0 var(--mist);
  color: #000;
  font-size: 40px;
  font-weight: bold;
}
.sunken.required { background: var(--cream); }
.short { width: 188px; }
.medium { width: 819px; }
.long { width: 1213px; }
.picked { color: #fff; background: #fff linear-gradient(#00f, #00f) 5px 9px / 54px 51px no-repeat; }
.lov {
  width: 41px;
  height: 68px;
  margin: 3px 0 0 3px;
  display: flex;
  align-items: center;
  justify-content: center;
  gap: 4px;
  background: var(--silver);
  border-top: 4px solid #fff;
  border-left: 3px solid #fff;
  border-radius: 2px 2px 6px 2px;
}
.lov i { width: 6px; height: 7px; background: #200; }

.hbar { height: 46px; margin: 5px 32px 0 501px; padding: 2px 0; display: flex; background: var(--mist); border-radius: 20px 0 0 20px; }
.hbar .sb { width: 44px; border-top: 4px solid #fff; border-left: 3px solid #fff; }
.hbar .left { border-radius: 20px 0 0 20px; }
.hbar .right { margin-left: auto; border-radius: 0 20px 20px 0; }
.bigthumb {
  width: 1073px;
  display: flex;
  align-items: center;
  justify-content: center;
  background: var(--silver);
  border-top: 4px solid #fff;
  border-left: 3px solid #fff;
  border-right: 2px solid var(--slate);
  box-shadow: -2px 0 0 var(--slate);
}

.actions { display: flex; justify-content: flex-end; gap: 70px; margin-top: 54px; padding-right: 86px; }
.act {
  width: 158px;
  height: 77px;
  padding-top: 2px;
  background: var(--silver);
  border-top: 4px solid #fff;
  border-left: 3px solid #fff;
  border-radius: 24px / 30px;
  color: #000;
  font-size: 38px;
}
.ok { padding-left: 8px; border-radius: 24px 4px 4px 24px / 30px 4px 4px 30px; box-shadow: 0 0 0 4px #000; }
.cancel { padding-right: 8px; border-radius: 4px 24px 24px 4px / 4px 30px 30px 4px; }

/* Callouts */
.highlight {
  position: absolute;
  left: 1728px;
  right: 15px;
  top: 952px;
  bottom: 31px;
  border: 21px solid #f00;
  filter: drop-shadow(7px 9px 7px rgba(0, 0, 0, .5));
  pointer-events: none;
}
.pointer { position: absolute; left: 1826px; top: 1836px; width: 229px; height: 61px; overflow: visible; filter: drop-shadow(7px 9px 7px rgba(0, 0, 0, .5)); }
```
